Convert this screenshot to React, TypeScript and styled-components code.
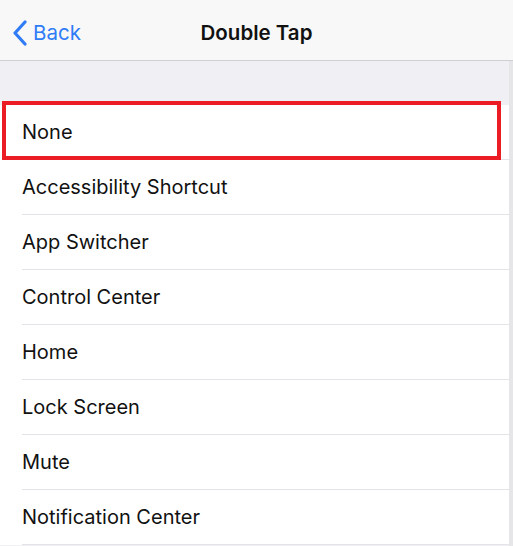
import React from "react";
import styled, { createGlobalStyle } from "styled-components";

const GlobalStyle = createGlobalStyle`
  html, body {
    margin: 0;
    padding: 0;
    background: #efeff4;
  }
  body {
    font-family: "Inter", "Liberation Sans", sans-serif;
    -webkit-font-smoothing: antialiased;
  }
`;

const Screen = styled.div`
  position: relative;
  width: 513px;
  height: 546px;
  overflow: hidden;
  background: #efeff4;
`;

const NavBar = styled.header`
  height: 61px;
  box-sizing: border-box;
  padding-top: 5px;
  display: grid;
  grid-template-columns: 1fr auto 1fr;
  align-items: center;
  background: #f8f8f8;
  border-bottom: 1px solid #cfcfd3;
`;

const BackButton = styled.button`
  justify-self: start;
  display: flex;
  align-items: center;
  gap: 5px;
  padding: 0 0 0 12px;
  border: none;
  background: none;
  color: #2f7cf6;
  font-family: inherit;
  font-size: 20.5px;
  cursor: pointer;
`;

const Title = styled.h1`
  margin: 0;
  font-size: 20.5px;
  font-weight: 600;
  color: #111;
`;

const Spacer = styled.div`
  height: 44px;
`;

const List = styled.ul`
  margin: 0;
  padding: 0 0 0 22px;
  list-style: none;
  background: #fff;
`;

const Row = styled.li`
  height: 55px;
  display: flex;
  align-items: center;
  font-size: 20px;
  color: #111;
  border-bottom: 1px solid #e3e3e8;
  box-sizing: border-box;
`;

const Highlight = styled.div`
  position: absolute;
  top: 101px;
  left: 2px;
  width: 499px;
  height: 59px;
  border: 4px solid #ec1c24;
  box-sizing: border-box;
  pointer-events: none;
`;

const ScrollTrack = styled.div`
  position: absolute;
  top: 61px;
  right: 0;
  width: 4px;
  bottom: 0;
  background: #e6e6e8;
`;

const options = [
  "None",
  "Accessibility Shortcut",
  "App Switcher",
  "Control Center",
  "Home",
  "Lock Screen",
  "Mute",
  "Notification Center",
];

const Chevron = () => (
  <svg width="16" height="26" viewBox="0 0 16 26" fill="none">
    <path
      d="M13 2 L3 13 L13 24"
      stroke="#2f7cf6"
      strokeWidth="3.2"
      strokeLinecap="round"
      strokeLinejoin="round"
    />
  </svg>
);

export default function App() {
  return (
    <>
      <GlobalStyle />
      <Screen>
        <NavBar>
          <BackButton>
            <Chevron />
            Back
          </BackButton>
          <Title>Double Tap</Title>
          <div />
        </NavBar>
        <Spacer />
        <List>
          {options.map((o) => (
            <Row key={o}>{o}</Row>
          ))}
        </List>
        <ScrollTrack />
        <Highlight />
      </Screen>
    </>
  );
}
